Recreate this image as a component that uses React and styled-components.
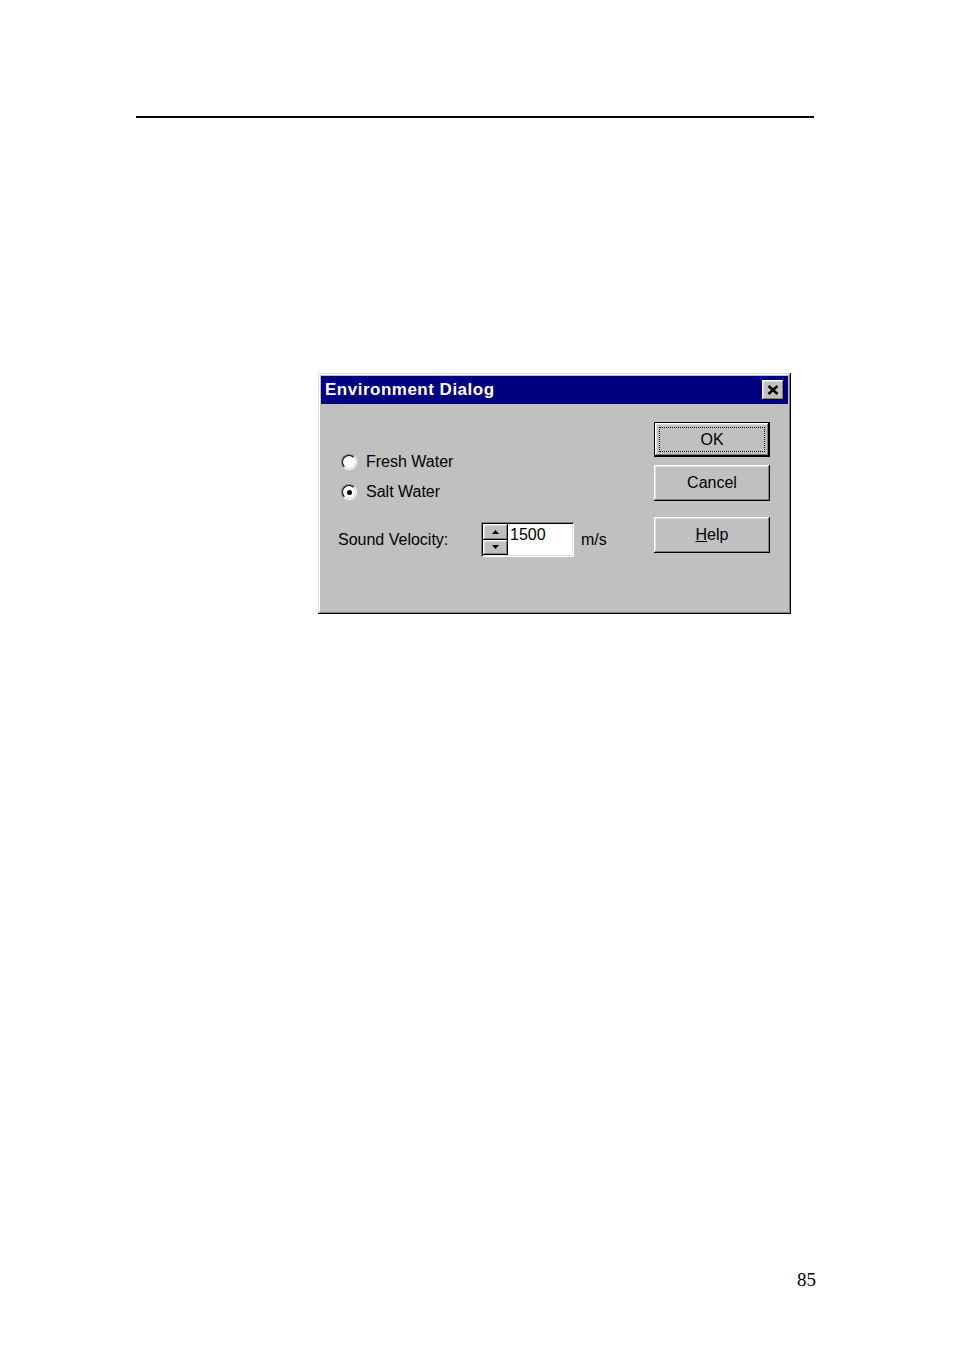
import React from 'react';
import styled, { createGlobalStyle } from 'styled-components';

const Global = createGlobalStyle`
  body {
    margin: 0;
    background: #ffffff;
  }
`;

const Page = styled.div`
  width: 954px;
  min-height: 1351px;
  display: flex;
  flex-direction: column;
  background: #ffffff;
`;

const Rule = styled.div`
  margin: 116px 0 0 136px;
  width: 678px;
  height: 2px;
  background: #000;
`;

const Dialog = styled.div`
  margin: 255px 0 0 318px;
  width: 473px;
  height: 241px;
  box-sizing: border-box;
  padding: 3px;
  background: #c0c0c0;
  box-shadow: inset -1px -1px #000, inset 1px 1px #dfdfdf,
    inset -2px -2px #808080, inset 2px 2px #fff;
  display: flex;
  flex-direction: column;
  font-family: "Liberation Sans", Arial, sans-serif;
  font-size: 16px;
  color: #000;
`;

const TitleBar = styled.div`
  height: 28px;
  background: #000080;
  display: flex;
  align-items: center;
  justify-content: space-between;
  padding: 0 4px 0 4px;
`;

const Title = styled.span`
  color: #fff;
  font-weight: bold;
  font-size: 17px;
  letter-spacing: 0.5px;
`;

const Raised = `
  background: #c0c0c0;
  box-shadow: inset -1px -1px #000, inset 1px 1px #fff,
    inset -2px -2px #808080, inset 2px 2px #dfdfdf;
`;

const CloseBtn = styled.div`
  ${Raised}
  width: 22px;
  height: 20px;
  display: flex;
  align-items: center;
  justify-content: center;
`;

const Body = styled.div`
  flex: 1;
  display: flex;
  justify-content: space-between;
  padding: 18px 18px 0 17px;
`;

const Left = styled.div`
  display: flex;
  flex-direction: column;
  padding-top: 25px;
`;

const RadioRow = styled.div`
  height: 30px;
  display: flex;
  align-items: center;
  gap: 9px;
  padding-left: 3px;
`;

const RadioOuter = styled.span`
  width: 16px;
  height: 16px;
  box-sizing: border-box;
  border-radius: 50%;
  border: 1px solid;
  border-color: #808080 #fff #fff #808080;
  display: flex;
`;

const RadioInner = styled.span`
  flex: 1;
  border-radius: 50%;
  border: 1px solid;
  border-color: #000 #dfdfdf #dfdfdf #000;
  background: #fff;
  display: flex;
  align-items: center;
  justify-content: center;
`;

const Dot = styled.span`
  width: 5px;
  height: 5px;
  border-radius: 50%;
  background: #000;
`;

const VelocityRow = styled.div`
  margin-top: 15px;
  height: 35px;
  display: flex;
  align-items: center;
`;

const Label = styled.span`
  width: 143px;
`;

const Field = styled.div`
  width: 93px;
  height: 35px;
  box-sizing: border-box;
  padding: 2px;
  background: #fff;
  box-shadow: inset 1px 1px #808080, inset -1px -1px #fff,
    inset 2px 2px #000, inset -2px -2px #dfdfdf;
  display: flex;
  align-items: flex-start;
`;

const Spin = styled.div`
  width: 25px;
  height: 31px;
  display: flex;
  flex-direction: column;
`;

const SpinHalf = styled.div`
  ${Raised}
  flex: 1;
  display: flex;
  align-items: center;
  justify-content: center;
`;

const Value = styled.span`
  padding: 1px 0 0 2px;
  line-height: 20px;
`;

const Unit = styled.span`
  margin-left: 7px;
`;

const Right = styled.div`
  display: flex;
  flex-direction: column;
  width: 116px;
`;

const Button = styled.div`
  ${Raised}
  box-sizing: border-box;
  height: ${(p) => p.$h || 36}px;
  margin-top: ${(p) => p.$gap || 0}px;
  display: flex;
  align-items: center;
  justify-content: center;
  ${(p) => p.$default && `border: 1px solid #000;`}
`;

const Focus = styled.span`
  flex: 1;
  align-self: stretch;
  margin: 4px;
  border: 1px dotted #000;
  display: flex;
  align-items: center;
  justify-content: center;
`;

const Footer = styled.div`
  margin-top: auto;
  padding: 0 138px 61px 0;
  text-align: right;
  font-family: "Liberation Serif", "Times New Roman", serif;
  font-size: 19px;
  line-height: 20px;
`;

const Radio = ({ checked }) => (
  <RadioOuter>
    <RadioInner>{checked && <Dot />}</RadioInner>
  </RadioOuter>
);

const Arrow = ({ up }) => (
  <svg width="7" height="4" viewBox="0 0 7 4">
    <path d={up ? 'M3.5 0L7 4H0z' : 'M0 0h7L3.5 4z'} fill="#000" />
  </svg>
);

export default function App() {
  return (
    <Page>
      <Global />
      <Rule />
      <Dialog>
        <TitleBar>
          <Title>Environment Dialog</Title>
          <CloseBtn>
            <svg width="12" height="10" viewBox="0 0 12 10">
              <path d="M1.5 1L10.5 9M10.5 1L1.5 9" stroke="#000" strokeWidth="2.4" />
            </svg>
          </CloseBtn>
        </TitleBar>
        <Body>
          <Left>
            <RadioRow>
              <Radio />
              <span>Fresh Water</span>
            </RadioRow>
            <RadioRow>
              <Radio checked />
              <span>Salt Water</span>
            </RadioRow>
            <VelocityRow>
              <Label>Sound Velocity:</Label>
              <Field>
                <Spin>
                  <SpinHalf>
                    <Arrow up />
                  </SpinHalf>
                  <SpinHalf>
                    <Arrow />
                  </SpinHalf>
                </Spin>
                <Value>1500</Value>
              </Field>
              <Unit>m/s</Unit>
            </VelocityRow>
          </Left>
          <Right>
            <Button $default $h={35}>
              <Focus>OK</Focus>
            </Button>
            <Button $gap={8}>Cancel</Button>
            <Button $gap={16}>
              <span>
                <u>H</u>elp
              </span>
            </Button>
          </Right>
        </Body>
      </Dialog>
      <Footer>85</Footer>
    </Page>
  );
}
